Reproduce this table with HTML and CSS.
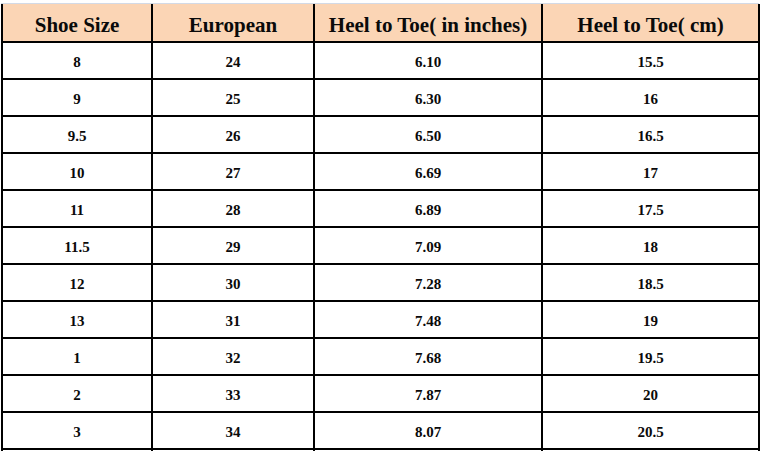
FILE: index.html
```html
<!DOCTYPE html>
<html>
<head>
<meta charset="utf-8">
<link rel="stylesheet" href="styles.css">
</head>
<body>
<div class="topline"></div>
<div class="sheet">
  <div class="cell head">Shoe Size</div>
  <div class="cell head">European</div>
  <div class="cell head">Heel to Toe( in inches)</div>
  <div class="cell head">Heel to Toe( cm)</div>

  <div class="cell">8</div><div class="cell">24</div><div class="cell">6.10</div><div class="cell">15.5</div>
  <div class="cell">9</div><div class="cell">25</div><div class="cell">6.30</div><div class="cell">16</div>
  <div class="cell">9.5</div><div class="cell">26</div><div class="cell">6.50</div><div class="cell">16.5</div>
  <div class="cell">10</div><div class="cell">27</div><div class="cell">6.69</div><div class="cell">17</div>
  <div class="cell">11</div><div class="cell">28</div><div class="cell">6.89</div><div class="cell">17.5</div>
  <div class="cell">11.5</div><div class="cell">29</div><div class="cell">7.09</div><div class="cell">18</div>
  <div class="cell">12</div><div class="cell">30</div><div class="cell">7.28</div><div class="cell">18.5</div>
  <div class="cell">13</div><div class="cell">31</div><div class="cell">7.48</div><div class="cell">19</div>
  <div class="cell">1</div><div class="cell">32</div><div class="cell">7.68</div><div class="cell">19.5</div>
  <div class="cell">2</div><div class="cell">33</div><div class="cell">7.87</div><div class="cell">20</div>
  <div class="cell">3</div><div class="cell">34</div><div class="cell">8.07</div><div class="cell">20.5</div>
  <div class="cell stub"></div><div class="cell stub"></div><div class="cell stub"></div><div class="cell stub"></div>
</div>
</body>
</html>
```
FILE: styles.css
```css
html, body {
  margin: 0;
  padding: 0;
  background: #fff;
  overflow: hidden;
}
body {
  font-family: "Liberation Serif", "Times New Roman", serif;
  font-weight: bold;
  color: #0a0a0a;
}
.topline {
  height: 3px;
  border-bottom: 1px solid #d3dae6;
  margin-left: 1px;
  width: 758px;
}
.sheet {
  margin-left: 1px;
  display: grid;
  grid-template-columns: 148px 160px 226px 215px;
  grid-template-rows: 37px repeat(11, 35px) 1px;
  gap: 2px;
  padding: 0 2px;
  background: #000;
  width: fit-content;
}
.cell {
  background: #fff;
  display: flex;
  align-items: center;
  justify-content: center;
  font-size: 15px;
  padding-top: 3px;
}
.cell.stub {
  padding: 0;
}
.head {
  background: #fbd5b5;
  font-size: 21px;
  padding-top: 5px;
}
```
